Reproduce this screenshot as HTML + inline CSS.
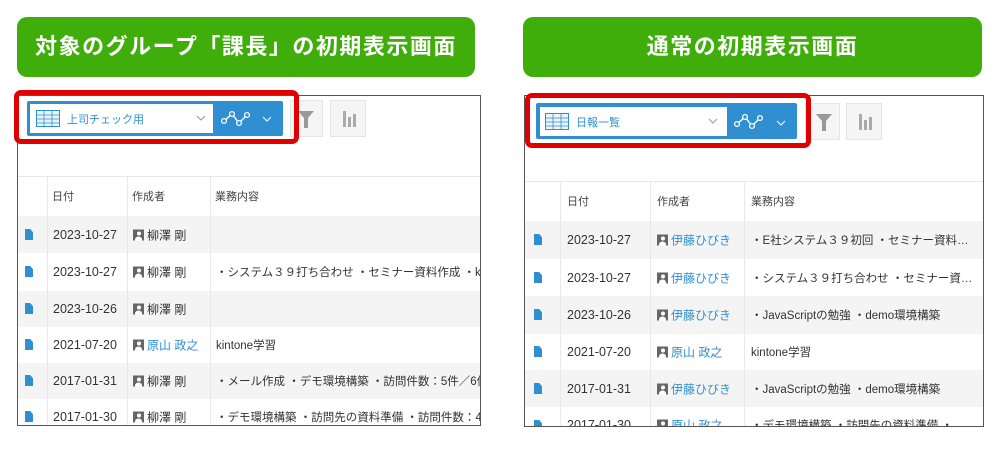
<!DOCTYPE html>
<html><head><meta charset="utf-8"><style>
*{margin:0;padding:0;box-sizing:border-box}
body{width:1000px;height:450px;background:#fff;position:relative;overflow:hidden;font-family:"Liberation Sans","Noto Sans CJK JP",sans-serif;color:#333}
.ab{position:absolute}
.title{background:#3fae0a;border-radius:10px;color:#fff;font-size:22px;font-weight:bold;text-align:center;line-height:60px;letter-spacing:1.5px}
.panel{border:1px solid #555;overflow:hidden;background:#fff}
.red{border:5px solid #e00000;border-radius:7px}
.dd{background:#2f8fd0;border-radius:2px}
.ddw{background:#fff;font-size:11px;color:#2f8fd0}
.btn{background:#f5f5f5;border:1px solid #e6e6e6}
.row{position:absolute;left:0;right:0;font-size:12.5px}
.sh{background:#f4f4f4}
.vl{position:absolute;top:0;bottom:0;width:1px;background:#e8e8e8}
.doc{position:absolute;width:8px;height:11px;background:#2f8fd0;clip-path:polygon(0 0,65% 0,100% 30%,100% 100%,0 100%)}
.av{display:inline-block;width:11px;height:11px;background:#666;vertical-align:-1px;margin-right:3px;position:relative;overflow:hidden}
.av:before{content:"";position:absolute;left:3.5px;top:2px;width:4px;height:4px;border-radius:50%;background:#fff}
.av:after{content:"";position:absolute;left:2px;top:7px;width:7px;height:6px;border-radius:50% 50% 0 0;background:#fff}
.nm{font-size:12px}
.lk{color:#2f8fd0}
.c{position:absolute;white-space:nowrap;top:50%;transform:translateY(-50%)}
.t{font-size:11.5px;overflow:hidden;text-overflow:ellipsis}
</style></head><body>

<div class="ab title" style="left:17px;top:17px;width:458px;height:60px">対象のグループ「課長」の初期表示画面</div>
<div class="ab title" style="left:523px;top:17px;width:459px;height:60px">通常の初期表示画面</div>

<!-- LEFT PANEL -->
<div class="ab panel" style="left:17px;top:95px;width:464px;height:331px">
  <div class="ab" style="left:0;right:0;top:80px;height:1px;background:#e8e8e8"></div>
  <div class="ab" style="left:0;right:0;top:80px;height:40px;font-size:11px;color:#444">
    <span class="c" style="left:34px">日付</span><span class="c" style="left:114px">作成者</span><span class="c" style="left:197px">業務内容</span>
  </div>
  <div class="ab" style="left:0;right:0;top:120px;bottom:0">
    <div class="row sh" style="top:0;height:37px"><div class="doc" style="left:7px;top:13px"></div><span class="c" style="left:35px">2023-10-27</span><span class="c nm" style="left:115px"><i class="av"></i>柳澤 剛</span></div>
    <div class="row" style="top:37px;height:38px"><div class="doc" style="left:7px;top:13px"></div><span class="c" style="left:35px">2023-10-27</span><span class="c nm" style="left:115px"><i class="av"></i>柳澤 剛</span><span class="c t" style="left:198px">・システム３９打ち合わせ ・セミナー資料作成 ・kintone</span></div>
    <div class="row sh" style="top:75px;height:36px"><div class="doc" style="left:7px;top:12px"></div><span class="c" style="left:35px">2023-10-26</span><span class="c nm" style="left:115px"><i class="av"></i>柳澤 剛</span></div>
    <div class="row" style="top:111px;height:36px"><div class="doc" style="left:7px;top:12px"></div><span class="c" style="left:35px">2021-07-20</span><span class="c nm lk" style="left:115px"><i class="av"></i>原山 政之</span><span class="c t" style="left:198px">kintone学習</span></div>
    <div class="row sh" style="top:147px;height:36px"><div class="doc" style="left:7px;top:12px"></div><span class="c" style="left:35px">2017-01-31</span><span class="c nm" style="left:115px"><i class="av"></i>柳澤 剛</span><span class="c t" style="left:198px">・メール作成 ・デモ環境構築 ・訪問件数：5件／6件 ・</span></div>
    <div class="row" style="top:183px;height:36px"><div class="doc" style="left:7px;top:12px"></div><span class="c" style="left:35px">2017-01-30</span><span class="c nm" style="left:115px"><i class="av"></i>柳澤 剛</span><span class="c t" style="left:198px">・デモ環境構築 ・訪問先の資料準備 ・訪問件数：4件／</span></div>
  </div>
  <div class="vl" style="left:29px;top:80px"></div><div class="vl" style="left:109px;top:80px"></div><div class="vl" style="left:192px;top:80px"></div>
</div>
<div class="ab btn" style="left:290px;top:100px;width:33px;height:37px"><svg class="ab" style="left:7px;top:10px" width="16" height="18"><path d="M0 0h16L10 7v10H6V7z" fill="#999"/></svg></div>
<div class="ab red" style="left:14px;top:90px;width:285px;height:54px"></div>
<div class="ab dd" style="left:27px;top:101px;width:256px;height:35px"></div>
<div class="ab ddw" style="left:30px;top:104px;width:183px;height:29px">
  <svg class="ab" style="left:6px;top:6px" width="24" height="17"><rect x=".5" y=".5" width="23" height="16" fill="#eaf4fb" stroke="#2f8fd0"/><path d="M1 5h22M1 9h22M1 13h22M8 1v16M16 1v16" stroke="#2f8fd0" stroke-width=".8"/></svg>
  <span class="ab" style="left:37px;top:7px">上司チェック用</span>
  <svg class="ab" style="left:166px;top:11px" width="10" height="6"><path d="M1 1l4 4 4-4" stroke="#999" fill="none"/></svg>
</div>
<svg class="ab" style="left:220px;top:108px" width="60" height="22"><path d="M4 13L12 6L19 15L27 7" stroke="#fff" stroke-width="1.4" fill="none"/><circle cx="4" cy="13" r="2.4" fill="#2f8fd0" stroke="#fff" stroke-width="1.3"/><circle cx="12" cy="6" r="2.4" fill="#2f8fd0" stroke="#fff" stroke-width="1.3"/><circle cx="19" cy="15" r="2.4" fill="#2f8fd0" stroke="#fff" stroke-width="1.3"/><circle cx="27" cy="7" r="2.4" fill="#2f8fd0" stroke="#fff" stroke-width="1.3"/><path d="M43 9l4 4 4-4" stroke="#fff" fill="none"/></svg>
<div class="ab btn" style="left:330px;top:100px;width:36px;height:37px"><svg class="ab" style="left:11px;top:10px" width="14" height="16"><path d="M1 0h3v16H1zM6 6h3v10H6zM11 3h3v13h-3z" fill="#aaa"/></svg></div>

<!-- RIGHT PANEL -->
<div class="ab panel" style="left:524px;top:95px;width:460px;height:332px">
  <div class="ab" style="left:0;right:0;top:85px;height:1px;background:#e8e8e8"></div>
  <div class="ab" style="left:0;right:0;top:85px;height:40px;font-size:11px;color:#444">
    <span class="c" style="left:42px">日付</span><span class="c" style="left:132px">作成者</span><span class="c" style="left:226px">業務内容</span>
  </div>
  <div class="ab" style="left:0;right:0;top:125px;bottom:0">
    <div class="row sh" style="top:0;height:38px"><div class="doc" style="left:9px;top:13px"></div><span class="c" style="left:42px">2023-10-27</span><span class="c nm lk" style="left:132px"><i class="av"></i>伊藤ひびき</span><span class="c t" style="left:226px;width:224px">・E社システム３９初回 ・セミナー資料作成 ・kintone</span></div>
    <div class="row" style="top:38px;height:37px"><div class="doc" style="left:9px;top:13px"></div><span class="c" style="left:42px">2023-10-27</span><span class="c nm lk" style="left:132px"><i class="av"></i>伊藤ひびき</span><span class="c t" style="left:226px;width:224px">・システム３９打ち合わせ ・セミナー資料作成 ・kintone</span></div>
    <div class="row sh" style="top:75px;height:38px"><div class="doc" style="left:9px;top:13px"></div><span class="c" style="left:42px">2023-10-26</span><span class="c nm lk" style="left:132px"><i class="av"></i>伊藤ひびき</span><span class="c t" style="left:226px">・JavaScriptの勉強 ・demo環境構築</span></div>
    <div class="row" style="top:113px;height:36px"><div class="doc" style="left:9px;top:12px"></div><span class="c" style="left:42px">2021-07-20</span><span class="c nm lk" style="left:132px"><i class="av"></i>原山 政之</span><span class="c t" style="left:226px">kintone学習</span></div>
    <div class="row sh" style="top:149px;height:37px"><div class="doc" style="left:9px;top:13px"></div><span class="c" style="left:42px">2017-01-31</span><span class="c nm lk" style="left:132px"><i class="av"></i>伊藤ひびき</span><span class="c t" style="left:226px">・JavaScriptの勉強 ・demo環境構築</span></div>
    <div class="row" style="top:186px;height:36px"><div class="doc" style="left:9px;top:13px"></div><span class="c" style="left:42px">2017-01-30</span><span class="c nm lk" style="left:132px"><i class="av"></i>原山 政之</span><span class="c t" style="left:226px;width:224px">・デモ環境構築 ・訪問先の資料準備 ・訪問件数：4件</span></div>
  </div>
  <div class="vl" style="left:35px;top:85px"></div><div class="vl" style="left:125px;top:85px"></div><div class="vl" style="left:219px;top:85px"></div>
</div>
<div class="ab btn" style="left:805px;top:103px;width:35px;height:37px"><svg class="ab" style="left:10px;top:10px" width="16" height="18"><path d="M0 0h16L10 7v10H6V7z" fill="#999"/></svg></div>
<div class="ab red" style="left:525px;top:93px;width:286px;height:55px"></div>
<div class="ab dd" style="left:536px;top:103px;width:261px;height:36px"></div>
<div class="ab ddw" style="left:540px;top:107px;width:187px;height:29px">
  <svg class="ab" style="left:5px;top:6px" width="24" height="17"><rect x=".5" y=".5" width="23" height="16" fill="#eaf4fb" stroke="#2f8fd0"/><path d="M1 5h22M1 9h22M1 13h22M8 1v16M16 1v16" stroke="#2f8fd0" stroke-width=".8"/></svg>
  <span class="ab" style="left:36px;top:7px">日報一覧</span>
  <svg class="ab" style="left:168px;top:11px" width="10" height="6"><path d="M1 1l4 4 4-4" stroke="#999" fill="none"/></svg>
</div>
<svg class="ab" style="left:733px;top:111px" width="60" height="22"><path d="M4 13L12 6L19 15L27 7" stroke="#fff" stroke-width="1.4" fill="none"/><circle cx="4" cy="13" r="2.4" fill="#2f8fd0" stroke="#fff" stroke-width="1.3"/><circle cx="12" cy="6" r="2.4" fill="#2f8fd0" stroke="#fff" stroke-width="1.3"/><circle cx="19" cy="15" r="2.4" fill="#2f8fd0" stroke="#fff" stroke-width="1.3"/><circle cx="27" cy="7" r="2.4" fill="#2f8fd0" stroke="#fff" stroke-width="1.3"/><path d="M44 10l4 4 4-4" stroke="#fff" fill="none"/></svg>
<div class="ab btn" style="left:846px;top:103px;width:36px;height:37px"><svg class="ab" style="left:11px;top:10px" width="14" height="16"><path d="M1 0h3v16H1zM6 6h3v10H6zM11 3h3v13h-3z" fill="#aaa"/></svg></div>
</body></html>
